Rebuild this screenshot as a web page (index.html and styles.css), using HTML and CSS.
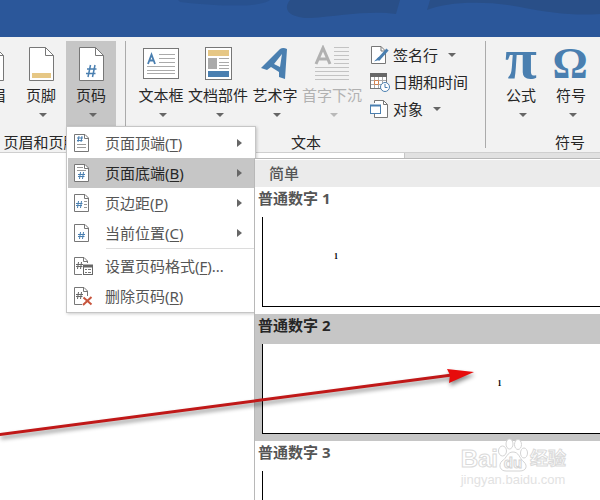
FILE: index.html
```html
<!DOCTYPE html>
<html lang="zh-CN">
<head>
    <meta charset="UTF-8">
    <meta name="viewport" content="width=device-width, initial-scale=1">
    <title>插入页码</title>
    <link rel="stylesheet" href="styles.css">
</head>
<body>
    <header class="titlebar">
        <svg width="600" height="37" viewBox="0 0 600 37">
            <path d="M180 2L178 0H270C262 6 235 8 180 2Z" fill="#28518f"/>
            <path d="M290 0C282 10 290 18 310 18C340 16 370 10 396 14L400 0Z" fill="#294f88"/>
            <path d="M430 0L427 10C445 2 485 0 520 7C550 13 575 16 600 14V0Z" fill="#294f88"/>
        </svg>
    </header>

    <div class="ribbon">
        <section class="group group-header">
            <div class="tools">
                <button class="tool">
                    <svg width="36" height="36" viewBox="0 0 36 36">
                        <path d="M6.500 2.500H22.500L30.500 10.500V35.500H6.500Z" fill="#fff" stroke="#777"/>
                        <path d="M22.500 2.500V10.500H30.500" fill="none" stroke="#777"/>
                    </svg>
                    <span>页眉</span>
                    <i class="caret"></i>
                </button>
                <button class="tool">
                    <svg width="36" height="36" viewBox="0 0 36 36">
                        <path d="M6.500 2.500H22.500L30.500 10.500V35.500H6.500Z" fill="#fff" stroke="#777"/>
                        <path d="M22.500 2.500V10.500H30.500" fill="none" stroke="#777"/>
                        <rect x="9" y="28" width="19" height="5" fill="#e6c785"/>
                    </svg>
                    <span>页脚</span>
                    <i class="caret"></i>
                </button>
                <button class="tool active">
                    <svg width="36" height="36" viewBox="0 0 36 36">
                        <path d="M6.500 2.500H22.500L30.500 10.500V35.500H6.500Z" fill="#fff" stroke="#777"/>
                        <path d="M22.500 2.500V10.500H30.500" fill="none" stroke="#777"/>
                        <path d="M17.500 20L15 32M22 20L19.500 32M14 24H23.500M13 28.500H22.500" fill="none" stroke="#4a7fb0" stroke-width="1.500"/>
                    </svg>
                    <span>页码</span>
                    <i class="caret"></i>
                </button>
            </div>
            <div class="group-name">页眉和页脚</div>
        </section>

        <section class="group group-text">
            <div class="tools">
                <button class="tool">
                    <svg width="36" height="36" viewBox="0 0 36 36">
                        <rect x=".5" y="3.500" width="35" height="30" fill="#fff" stroke="#777"/>
                        <path d="M5 19L8.500 9.500L12 19M6 15.500H11" fill="none" stroke="#4a7fb0" stroke-width="1.800"/>
                        <path d="M16 9.500H32M16 13.500H32M16 17.500H32M4 21.500H32M4 25.500H32M4 28.500H32" stroke="#aaa"/>
                    </svg>
                    <span>文本框</span>
                    <i class="caret"></i>
                </button>
                <button class="tool wide">
                    <svg width="36" height="36" viewBox="0 0 36 36">
                        <rect x="5.500" y="2.500" width="26" height="32" fill="#fff" stroke="#777"/>
                        <rect x="8" y="5" width="21" height="6" fill="#e6c785"/>
                        <rect x="8" y="13" width="9" height="11" fill="#aaa"/>
                        <path d="M19 13.500H29M19 17.500H29M19 20.500H29M19 23.500H29" stroke="#aaa"/>
                        <rect x="8" y="26" width="21" height="6" fill="#4a7fb0"/>
                    </svg>
                    <span>文档部件</span>
                    <i class="caret"></i>
                </button>
                <button class="tool">
                    <svg width="36" height="36" viewBox="0 0 36 36">
                        <path d="M4 23L23 4Q26 2 30 4L28 34L22 32V27L14 22L10 25ZM17 19L23 22L25 9Z" fill="#4a7fb0" fill-rule="evenodd"/>
                    </svg>
                    <span>艺术字</span>
                    <i class="caret"></i>
                </button>
                <button class="tool wide" disabled>
                    <svg width="36" height="36" viewBox="0 0 36 36">
                        <path d="M2 19L9 3L16 19M5 14H13.500" fill="none" stroke="#b1b1b1" stroke-width="3"/>
                        <path d="M20 2.500H35M20 6.500H35M20 10.500H35M20 14.500H35M20 18.500H35M1 22.500H35M1 26.500H35M1 30.500H35M1 34.500H35" stroke="#c3c3c3"/>
                    </svg>
                    <span>首字下沉</span>
                    <i class="caret"></i>
                </button>
                <div class="small-tools">
                    <button class="small-tool">
                        <svg width="20" height="20" viewBox="0 0 20 20">
                            <path d="M1.500 1.500H11L15.500 6V18.500H1.500Z" fill="#fff" stroke="#777"/>
                            <path d="M11 1.500V6H15" fill="none" stroke="#777"/>
                            <path d="M8 15L17.500 4.500" stroke="#4a7fb0" stroke-width="3"/>
                            <path d="M4 16.500L8.500 12L10.500 14.500Z" fill="#4a7fb0"/>
                        </svg>
                        <span>签名行</span>
                        <i class="caret"></i>
                    </button>
                    <button class="small-tool">
                        <svg width="20" height="20" viewBox="0 0 20 20">
                            <rect x=".5" y="1.500" width="16" height="15" fill="#fff" stroke="#777"/>
                            <path d="M0 1H17V5H0Z" fill="#666"/>
                            <path d="M4.500 5V16M8.500 5V16M12.500 5V16M1 8.500H16M1 12.500H16" stroke="#aaa"/>
                            <path d="M4.500 8.500H8.500V12.500H4.500Z" fill="#fff" stroke="#d38350"/>
                            <circle cx="15" cy="15" r="4.500" fill="#fff" stroke="#4a7fb0"/>
                            <path d="M15 12V15.500H17.500" fill="none" stroke="#4a7fb0"/>
                        </svg>
                        <span>日期和时间</span>
                    </button>
                    <button class="small-tool">
                        <svg width="20" height="20" viewBox="0 0 20 20">
                            <path d="M4.500 4V1.500H13.500L17.500 5.500V18.500H4.500V15" fill="#fff" stroke="#777"/>
                            <path d="M13.500 1.500V5.500H17.500" fill="none" stroke="#777"/>
                            <rect x=".5" y="6.500" width="10" height="8" fill="#fff" stroke="#4a7fb0"/>
                            <path d="M0 6.500H11" stroke="#4a7fb0" stroke-width="2"/>
                        </svg>
                        <span>对象</span>
                        <i class="caret"></i>
                    </button>
                </div>
            </div>
            <div class="group-name">文本</div>
        </section>

        <section class="group group-symbol">
            <div class="tools">
                <button class="tool">
                    <svg class="symbol" width="36" height="36" viewBox="0 0 36 36">
                        <text class="pi" x="18" y="33" text-anchor="middle">π</text>
                    </svg>
                    <span>公式</span>
                    <i class="caret"></i>
                </button>
                <button class="tool">
                    <svg class="symbol" width="36" height="36" viewBox="0 0 36 36">
                        <text class="omega" x="17" y="33" text-anchor="middle">Ω</text>
                    </svg>
                    <span>符号</span>
                    <i class="caret"></i>
                </button>
            </div>
            <div class="group-name">符号</div>
        </section>
    </div>

    <main class="workspace">
        <div class="document"></div>
    </main>

    <div class="menu">
        <button class="menu-item">
            <svg width="20" height="20" viewBox="0 0 20 20">
                <path d="M.5 1.500H11L14.500 5V18.500H.5Z" fill="#fff" stroke="#777"/>
                <path d="M10.500 1.500V5.500H14.500" fill="none" stroke="#777"/>
                <path d="M5 3L4 9M8 3L7 9M3 5H9M3 7.500H8.500" stroke="#4a7fb0"/>
                <path d="M3 11.500H12M3 14.500H12" stroke="#999"/>
            </svg>
            <span>页面顶端(<u>T</u>)</span>
            <i class="arrow"></i>
        </button>
        <button class="menu-item active">
            <svg width="20" height="20" viewBox="0 0 20 20">
                <path d="M.5 1.500H11L14.500 5V18.500H.5Z" fill="#fff" stroke="#777"/>
                <path d="M10.500 1.500V5.500H14.500" fill="none" stroke="#777"/>
                <path d="M3 4.500H9M3 7.500H12" stroke="#999"/>
                <path d="M6.500 9L5.500 16M9.500 9L8.500 16M4 11.500H11M4 13.500H10.500" stroke="#4a7fb0"/>
            </svg>
            <span>页面底端(<u>B</u>)</span>
            <i class="arrow"></i>
        </button>
        <button class="menu-item">
            <svg width="20" height="20" viewBox="0 0 20 20">
                <path d="M.5 1.500H11L14.500 5V18.500H.5Z" fill="#fff" stroke="#777"/>
                <path d="M10.500 1.500V5.500H14.500" fill="none" stroke="#777"/>
                <path d="M4.500 8L3.500 15M7.500 8L6.500 15M2 10.500H8.500M2 12.500H8" stroke="#4a7fb0"/>
                <path d="M10 8.500H13M10 11.500H13M10 14.500H13" stroke="#999"/>
            </svg>
            <span>页边距(<u>P</u>)</span>
            <i class="arrow"></i>
        </button>
        <button class="menu-item">
            <svg width="20" height="20" viewBox="0 0 20 20">
                <path d="M.5 1.500H11L14.500 5V18.500H.5Z" fill="#fff" stroke="#777"/>
                <path d="M10.500 1.500V5.500H14.500" fill="none" stroke="#777"/>
                <path d="M6.500 9L5.500 16M9.500 9L8.500 16M4 11.500H11M4 13.500H10.500" stroke="#4a7fb0"/>
            </svg>
            <span>当前位置(<u>C</u>)</span>
            <i class="arrow"></i>
        </button>
        <hr>
        <button class="menu-item">
            <svg width="20" height="20" viewBox="0 0 20 20">
                <path d="M8 18.500H.5V1.500H10L13.500 5V7" fill="#fff" stroke="#777"/>
                <path d="M9.500 1.500V5.500H13.500" fill="none" stroke="#777"/>
                <path d="M4.500 6L3.500 13M7.500 6L6.500 13M2 8.500H9M2 10.500H8.500" stroke="#666"/>
                <rect x="9.500" y="9.500" width="9" height="9" fill="#fff" stroke="#666"/>
                <path d="M9 10H19" stroke="#666" stroke-width="3"/>
                <path d="M11 13.500H13M14 13.500H17M11 16.500H13M14 16.500H17" stroke="#777"/>
            </svg>
            <span>设置页码格式(<u>F</u>)...</span>
        </button>
        <button class="menu-item">
            <svg width="20" height="20" viewBox="0 0 20 20">
                <path d="M8 18.500H.5V1.500H10L13.500 5V10" fill="#fff" stroke="#777"/>
                <path d="M9.500 1.500V5.500H13.500" fill="none" stroke="#777"/>
                <path d="M4.500 6L3.500 13M7.500 6L6.500 13M2 8.500H9M2 10.500H8.500" stroke="#666"/>
                <path d="M9.500 11.500L17.500 18.500M17.500 11L9 19" stroke="#c8553d" stroke-width="2"/>
            </svg>
            <span>删除页码(<u>R</u>)</span>
        </button>
    </div>

    <div class="gallery-clip">
        <div class="gallery">
            <h2>简单</h2>
            <button class="gallery-item">
                <span class="name">普通数字 1</span>
                <span class="preview left">1</span>
            </button>
            <button class="gallery-item active">
                <span class="name">普通数字 2</span>
                <span class="preview center">1</span>
            </button>
            <button class="gallery-item">
                <span class="name">普通数字 3</span>
                <span class="preview"></span>
            </button>
        </div>
    </div>

    <!-- red pointer to the second number style -->
    <svg class="pointer" width="490" height="90" viewBox="0 0 490 90">
        <path d="M-4 75L452 15" stroke="#c01818" stroke-width="3"/>
        <path d="M474 12L447 9L450 15L449 23Z" fill="#e60c0c"/>
    </svg>

    <div class="watermark">
        <div class="brand">
            <span>Bai</span>
            <svg width="30" height="34" viewBox="0 0 30 34">
                <g fill="#fff" stroke="#d4d4d4">
                    <ellipse cx="4.500" cy="13" rx="4" ry="5"/>
                    <ellipse cx="11.500" cy="6" rx="3.500" ry="5"/>
                    <ellipse cx="20" cy="6.500" rx="3.500" ry="5"/>
                    <ellipse cx="26" cy="15" rx="3.500" ry="5"/>
                    <path d="M15 14C9 14 9 20 4 23C0 27 2 33 8 33H22C28 33 30 28 26 24C21 20 21 14 15 14Z"/>
                </g>
                <text x="15" y="30" text-anchor="middle">du</text>
            </svg>
            <span class="cn">经验</span>
        </div>
        <div class="url">jingyan.baidu.com</div>
    </div>
</body>
</html>
```
FILE: styles.css
```css
* {
    box-sizing: border-box;
}

body {
    position: relative;
    display: flex;
    flex-direction: column;
    min-height: 100vh;
    margin: 0;
    overflow: hidden;
    font-family: "Noto Sans", "Noto Sans CJK SC", sans-serif;
    font-size: 15px;
    line-height: 20px;
    color: #262626;
    background: #fff;
}

button {
    padding: 0;
    border: none;
    background: none;
    font: inherit;
    color: inherit;
    white-space: nowrap;
    cursor: pointer;
}

svg {
    display: block;
    flex: none;
}

/* title bar */
.titlebar {
    height: 37px;
    background: #2b579a;
    overflow: hidden;
}

/* ribbon */
.ribbon {
    display: flex;
    height: 116px;
    padding: 4px 0;
    background: #f2f2f2;
    border-bottom: 1px solid #cfcfcf;
    overflow: hidden;
}

.group {
    display: flex;
    flex-direction: column;
    flex: none;
}

/* the first group is scrolled partly out of the window */
.group-header {
    width: 150px;
    margin-left: -34px;
}

.group-text {
    width: 340px;
}

.group-symbol {
    width: 148px;
}

.group + .group {
    position: relative;
    margin-left: 20px;
}

.group + .group::before {
    content: "";
    position: absolute;
    top: 0;
    bottom: 0;
    left: -11px;
    width: 1px;
    background: #ababab;
}

.tools {
    display: flex;
    flex: none;
    height: 91px;
}

.group-name {
    text-align: center;
}

.tool {
    display: flex;
    flex-direction: column;
    align-items: center;
    width: 50px;
    padding-top: 4px;
}

.tool span {
    margin-top: 4px;
}

.tool.wide {
    width: 64px;
}

.tool.active {
    background: #c6c6c6;
}

.tool:disabled {
    color: #b1b1b1;
}

.symbol {
    overflow: visible;
    font-family: "Liberation Serif", serif;
    font-weight: bold;
    fill: #4a7fb0;
}

.pi {
    font-size: 58px;
}

.omega {
    font-size: 44px;
}

.caret {
    border: 4px solid transparent;
    border-top-color: #666;
    border-bottom: none;
}

.tool .caret {
    margin: 8px 0 0 4px;
}

.tool:disabled .caret {
    border-top-color: #b9b9b9;
}

.small-tools {
    display: flex;
    flex-direction: column;
    padding-left: 6px;
}

.small-tool {
    display: flex;
    align-items: center;
    height: 27px;
}

.small-tool span {
    margin-left: 3px;
}

.small-tool .caret {
    margin-left: 10px;
}

/* document area */
.workspace {
    display: flex;
    flex: 1;
    background: #e1e1e1;
}

.document {
    width: 405px;
    background: #fff;
    border-right: 1px solid #c6c6c6;
}

/* page number menu */
.menu {
    position: absolute;
    top: 126px;
    left: 66px;
    width: 190px;
    padding: 1px;
    background: #fff;
    border: 1px solid #c6c6c6;
    box-shadow: 1px 1px 3px rgba(0, 0, 0, 0.2);
    color: #555;
}

.menu-item {
    display: flex;
    align-items: center;
    width: 100%;
    height: 30px;
    padding: 0 12px 0 6px;
}

.menu-item span {
    margin-left: 11px;
}

.menu-item.active {
    background: #c6c6c6;
    color: #262626;
}

.menu-item u {
    text-underline-offset: 2px;
}

.arrow {
    margin-left: auto;
    border: 4px solid transparent;
    border-left: 5px solid #666;
    border-right: none;
}

.menu hr {
    height: 1px;
    margin: 0 0 2px 38px;
    border: none;
    background: #dcdcdc;
}

/* number style gallery, wider than the window */
.gallery-clip {
    position: absolute;
    top: 158px;
    right: 0;
    bottom: 0;
    left: 254px;
    overflow: hidden;
}

.gallery {
    width: 490px;
    padding-top: 1px;
    background: #fff;
    border: 1px solid #b8b8b8;
}

.gallery h2 {
    margin: 0;
    padding: 3px 14px 4px;
    background: #ebebeb;
    font-size: 15px;
    font-weight: 500;
    color: #555;
}

.gallery-item {
    display: block;
    width: 100%;
    padding: 0 7px 7px;
    text-align: left;
    color: #555;
}

.gallery-item.active {
    background: #c6c6c6;
    color: #262626;
}

.name {
    display: block;
    margin: 0 -4px 8px;
    line-height: 22px;
    font-weight: bold;
}

.preview {
    display: block;
    height: 90px;
    padding: 0 71px;
    background: #fff;
    border-left: 1px solid #000;
    border-bottom: 1px solid #000;
    font-family: "Liberation Serif", serif;
    font-size: 8px;
    font-weight: bold;
    line-height: 80px;
    color: #000;
}

.left {
    text-align: left;
}

.center {
    text-align: center;
}

.pointer {
    position: absolute;
    top: 360px;
    left: 0;
    filter: drop-shadow(1px 3px 2px rgba(0, 0, 0, 0.45));
    pointer-events: none;
}

/* watermark */
.watermark {
    position: absolute;
    right: 34px;
    bottom: 12px;
    font-family: "Liberation Sans", "Noto Sans CJK SC", sans-serif;
    font-weight: bold;
    color: #fff;
    -webkit-text-stroke: 1px #dadada;
    pointer-events: none;
}

.brand {
    display: flex;
    align-items: flex-end;
    font-size: 24px;
    line-height: 26px;
}

.brand text {
    font-size: 15px;
    fill: #fff;
    stroke: #d4d4d4;
}

.brand .cn {
    margin-left: 2px;
    font-size: 18px;
}

.url {
    font-size: 13px;
    font-weight: normal;
    line-height: 16px;
    color: #e2e2e2;
    -webkit-text-stroke: 0;
}
```
